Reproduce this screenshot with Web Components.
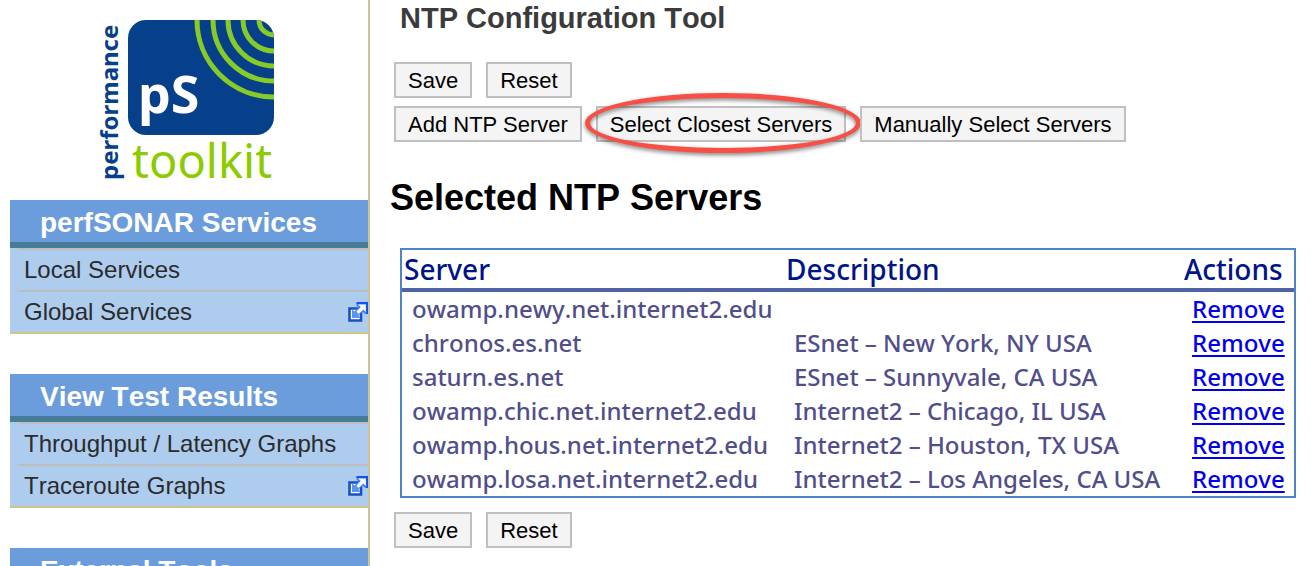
<!DOCTYPE html>
<html lang="en">
<head>
<meta charset="utf-8">
<title>NTP Configuration Tool</title>
<style>
  body { margin: 0; background: #fff; font-family: "Liberation Sans", Arial, sans-serif; font-kerning: none; }
</style>
</head>
<body>
<ntp-page></ntp-page>
<script>
function define(name, html, setup) {
  customElements.define(name, class extends HTMLElement {
    constructor() {
      super();
      this.attachShadow({ mode: "open" }).innerHTML = html;
    }
    connectedCallback() { if (setup) setup(this, this.shadowRoot); }
  });
}

define("toolkit-logo", `
  <style>
    :host { display: block; }
    svg { display: block; overflow: visible; }
    text { font-family: "Noto Sans", "Open Sans", sans-serif; }
  </style>
  <svg width="180" height="184" viewBox="98 8 180 184" role="img" aria-label="pS performance toolkit">
    <defs><clipPath id="c"><rect x="128" y="20" width="146" height="115" rx="18"/></clipPath></defs>
    <rect x="128" y="20" width="146" height="115" rx="18" fill="#07408a"/>
    <g clip-path="url(#c)" fill="none" stroke="#86cb28" stroke-width="5">
      <circle cx="274" cy="20" r="15"/><circle cx="274" cy="20" r="31"/><circle cx="274" cy="20" r="46"/>
      <circle cx="274" cy="20" r="61"/><circle cx="274" cy="20" r="77"/>
    </g>
    <text x="138" y="113" font-size="52" font-weight="700" fill="#fff">pS</text>
    <text x="132" y="178" font-size="47" fill="#8ccb00">toolkit</text>
    <text transform="translate(118 180) rotate(-90)" font-size="24" font-weight="700" fill="#07408a">performance</text>
  </svg>`);

define("menu-item", `
  <style>
    :host { display: block; }
    .rule { height: 2px; margin-left: 4px; background: linear-gradient(90deg, transparent, #bdbdbd 8px); }
    a { display: flex; align-items: center; justify-content: space-between; height: 40px; padding-left: 14px;
        color: #2b2b2b; font-size: 24px; white-space: nowrap; text-decoration: none; }
    svg { display: none; flex: none; }
    :host([external]) svg { display: block; }
  </style>
  <div class="rule"></div>
  <a href="#"><slot></slot>
    <svg width="20" height="20" viewBox="0 0 20 20" aria-hidden="true">
      <path d="M1.5 6.5H13V18.5H1.5Z" fill="#fff" stroke="#1450c8" stroke-width="2.6"/>
      <path d="M8.5 1H19.2V12H17L14.5 9.5L10.5 13.5L12 15.5H4V7.5L6.5 9.5L10.5 5.5L8.5 3.5Z" fill="#3f83f4"/>
      <path d="M8.5 1H19.2V12" fill="none" stroke="#1450fa" stroke-width="2"/>
      <path d="M10 2.4H17.8V10L15.4 7.6L9 13.4L6.8 11.2L12.8 5.1Z" fill="#fff"/>
      <path d="M4 8V16H12L9.6 13.6L11 12.2L8 9.2L6.5 10.5Z" fill="#5b96ec"/>
    </svg>
  </a>`);

define("menu-panel", `
  <style>
    :host { display: block; }
    h2 { margin: 0; height: 42px; line-height: 46px; padding-left: 30px; background: #6b9ddc; color: #fff;
         border-bottom: 6px solid #457d98; font-size: 28px; white-space: nowrap; }
    .items { background: #aeccee; border-bottom: 2px solid #d1c584; }
  </style>
  <h2></h2><div class="items"><slot></slot></div>`,
  (el, root) => { root.querySelector("h2").textContent = el.getAttribute("heading"); });

define("side-bar", `
  <style>
    :host { display: flex; flex-direction: column; box-sizing: border-box; width: 370px; flex: none;
            padding-left: 10px; border-right: 2px solid #cec29f; }
    .logo { padding: 8px 0 8px 88px; }
    nav { display: flex; flex-direction: column; gap: 40px; }
  </style>
  <div class="logo"><toolkit-logo></toolkit-logo></div>
  <nav>
    <menu-panel heading="perfSONAR Services">
      <menu-item>Local Services</menu-item><menu-item external>Global Services</menu-item>
    </menu-panel>
    <menu-panel heading="View Test Results">
      <menu-item>Throughput / Latency Graphs</menu-item><menu-item external>Traceroute Graphs</menu-item>
    </menu-panel>
    <menu-panel heading="External Tools"></menu-panel>
  </nav>`);

define("tool-button", `
  <style>
    :host { display: block; position: relative; }
    button { display: block; height: 36px; margin: 0; padding: 2px 12px 0; border: 2px solid #c0c0c0; border-radius: 0;
             background: #f4f4f4; color: #000; font: 22px "Liberation Sans", Arial, sans-serif; white-space: nowrap; }
    .ring { display: none; }
    :host([circled]) .ring { display: block; position: absolute; inset: -13px -15px -11px -11px; border: 5px solid #f84e43;
             border-radius: 50%; filter: drop-shadow(0 2px 2px rgba(0,0,0,.5)); pointer-events: none; }
  </style>
  <button type="button"><slot></slot></button><span class="ring"></span>`);

define("button-row", `
  <style>:host { display: flex; gap: 14px; }</style><slot></slot>`);

define("server-table", `
  <style>
    :host { display: block; }
    table { width: 100%; table-layout: fixed; border-collapse: separate; border-spacing: 0; border: 2px solid #5084c4;
            box-sizing: border-box; font-family: "Noto Sans", "Open Sans", sans-serif; }
    .server { width: 382px; } .actions { width: 112px; }
    th, td { text-align: left; white-space: nowrap; }
    th { height: 38px; padding: 0 2px; border-bottom: 4px solid #5062a6; color: #001489; font-size: 28px; line-height: 38px; font-weight: 500; }
    td { height: 34px; padding: 0 0 0 10px; color: #514f8b; font-size: 24px; line-height: 34px; font-weight: 500; }
    a { color: #00e; text-decoration-thickness: 2px; text-underline-offset: 3px; }
  </style>
  <table>
    <colgroup><col class="server"><col><col class="actions"></colgroup>
    <thead><tr><th scope="col">Server</th><th scope="col">Description</th><th scope="col">Actions</th></tr></thead>
    <tbody></tbody>
  </table>`,
  (el, root) => {
    const servers = [
      ["owamp.newy.net.internet2.edu", ""],
      ["chronos.es.net", "ESnet – New York, NY USA"],
      ["saturn.es.net", "ESnet – Sunnyvale, CA USA"],
      ["owamp.chic.net.internet2.edu", "Internet2 – Chicago, IL USA"],
      ["owamp.hous.net.internet2.edu", "Internet2 – Houston, TX USA"],
      ["owamp.losa.net.internet2.edu", "Internet2 – Los Angeles, CA USA"]
    ];
    root.querySelector("tbody").innerHTML = servers.map(([host, text]) =>
      `<tr><td>${host}</td><td>${text}</td><td><a href="#">Remove</a></td></tr>`).join("");
  });

define("ntp-config", `
  <style>
    :host { display: block; flex: 1; min-width: 0; padding: 0 20px; }
    h1 { margin: 0 0 26px 10px; font-size: 29px; line-height: 36px; color: #3b3b3b; }
    h2 { margin: 34px 0 28px; font-size: 36px; line-height: 44px; color: #000; }
    button-row { margin: 0 0 8px 4px; }
    server-table { margin: 0 0 14px 10px; }
  </style>
  <h1>NTP Configuration Tool</h1>
  <button-row><tool-button>Save</tool-button><tool-button>Reset</tool-button></button-row>
  <button-row>
    <tool-button>Add NTP Server</tool-button>
    <tool-button circled>Select Closest Servers</tool-button>
    <tool-button>Manually Select Servers</tool-button>
  </button-row>
  <h2>Selected NTP Servers</h2>
  <server-table></server-table>
  <button-row><tool-button>Save</tool-button><tool-button>Reset</tool-button></button-row>`);

define("ntp-page", `
  <style>:host { display: flex; min-height: 100vh; }</style>
  <side-bar></side-bar><ntp-config></ntp-config>`);
</script>
</body>
</html>
